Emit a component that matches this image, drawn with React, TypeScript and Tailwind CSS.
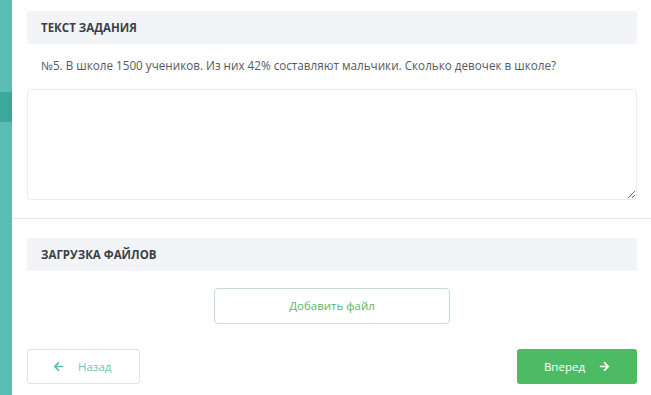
import { FaArrowLeft, FaArrowRight } from "react-icons/fa";

function SectionHeader({ title }: { title: string }) {
  return (
    <div className="flex h-[33px] items-center rounded-[3px] bg-[#f3f4f8] px-[14px]">
      <span className="text-[11.5px] font-bold uppercase text-[#3c3f45]">{title}</span>
    </div>
  );
}

export default function App() {
  return (
    <div className="flex h-[395px] w-[651px] overflow-hidden bg-white font-['Open_Sans',sans-serif]">
      <aside className="flex w-[12px] shrink-0 flex-col bg-[#5bbdb3]">
        <div className="h-[92px]" />
        <div className="h-[30px] bg-[#3aa99b]" />
      </aside>

      <main className="flex flex-1 flex-col">
        <section className="px-[15px] pt-[11px] pr-[14px]">
          <SectionHeader title="Текст задания" />
          <p className="mt-[12px] pl-[14px] text-[11.7px] leading-[18px] text-[#555a60]">
            №5. В школе 1500 учеников. Из них 42% составляют мальчики. Сколько девочек в школе?
          </p>
          <textarea className="mt-[15px] block h-[111px] w-full resize-y rounded-[3px] border border-[#ececec] bg-white outline-none" />
        </section>

        <div className="mt-[18px] h-px bg-[#e8e8e8]" />

        <section className="px-[15px] pt-[19px] pr-[14px]">
          <SectionHeader title="Загрузка файлов" />
          <div className="mt-[17px] flex justify-center">
            <button className="h-[36px] w-[236px] rounded-[4px] border border-[#c9ddd4] text-[11.5px] text-[#5cb66a]">
              Добавить файл
            </button>
          </div>
        </section>

        <div className="flex items-center justify-between px-[15px] pt-[25px] pr-[14px]">
          <button className="flex h-[35px] w-[113px] items-center gap-[14px] rounded-[3px] border border-[#dde3e6] pl-[25px] text-[11.5px] text-[#74c2b9]">
            <FaArrowLeft size={11} className="text-[#5bbdb3]" />
            Назад
          </button>
          <button className="flex h-[35px] w-[120px] items-center justify-center gap-[14px] rounded-[3px] bg-[#4dbb63] text-[11.5px] text-white">
            Вперед
            <FaArrowRight size={11} />
          </button>
        </div>
      </main>
    </div>
  );
}
